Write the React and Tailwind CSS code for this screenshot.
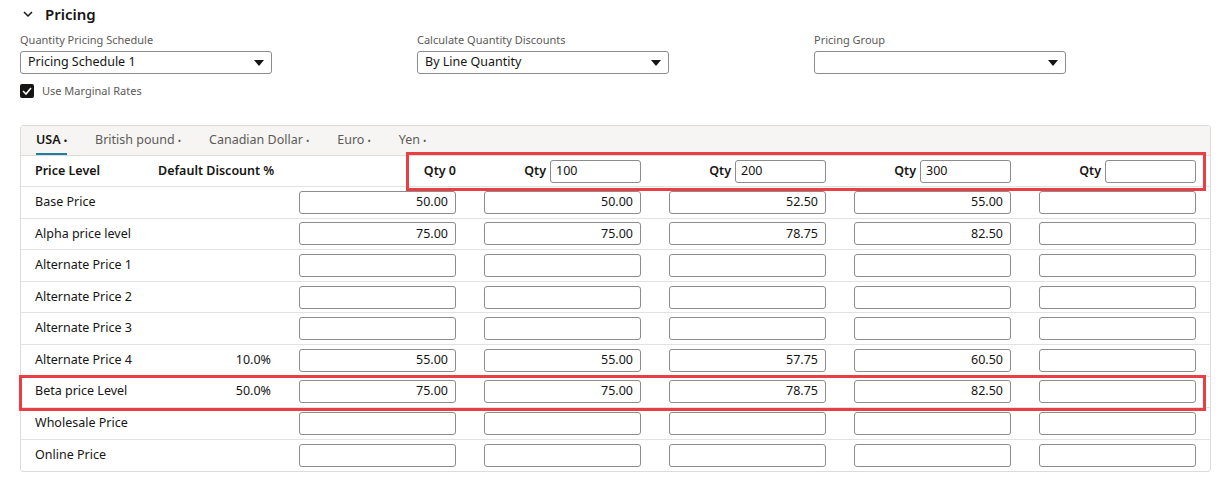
const rows = [
  ["Base Price", "", ["50.00", "50.00", "52.50", "55.00", ""]],
  ["Alpha price level", "", ["75.00", "75.00", "78.75", "82.50", ""]],
  ["Alternate Price 1", "", ["", "", "", "", ""]],
  ["Alternate Price 2", "", ["", "", "", "", ""]],
  ["Alternate Price 3", "", ["", "", "", "", ""]],
  ["Alternate Price 4", "10.0%", ["55.00", "55.00", "57.75", "60.50", ""]],
  ["Beta price Level", "50.0%", ["75.00", "75.00", "78.75", "82.50", ""]],
  ["Wholesale Price", "", ["", "", "", "", ""]],
  ["Online Price", "", ["", "", "", "", ""]],
];

function Select({ value }) {
  return (
    <div className="w-[252px] h-[23px] border border-[#8c8c8c] rounded-[3px] flex items-center justify-between px-[7px] text-[12.5px] text-[#161513] bg-white">
      <span>{value}</span>
      <svg width="10" height="6" viewBox="0 0 10 6"><path d="M0 0h10L5 6z" fill="#161513" /></svg>
    </div>
  );
}

function Cell({ v }) {
  return (
    <div className="w-[185px] flex justify-end">
      <div className="w-[157px] h-[23px] border border-[#8c8c8c] rounded-[3px] flex items-center justify-end px-[7px] text-[12.5px] text-[#161513] bg-white">{v}</div>
    </div>
  );
}

export default function App() {
  const tabs = ["British pound", "Canadian Dollar", "Euro", "Yen"];
  return (
    <div className="w-[1223px] h-[482px] bg-white relative" style={{ fontFamily: '"Noto Sans", sans-serif' }}>
      <div className="flex items-center pl-[22px] pt-[4px] h-[24px]">
        <svg width="12" height="8" viewBox="0 0 12 8"><path d="M2 2l4 4 4-4" stroke="#161513" strokeWidth="1.5" fill="none" /></svg>
        <span className="ml-[11px] text-[15px] font-semibold text-[#161513]">Pricing</span>
      </div>
      <div className="flex pl-[20px] mt-[8px] gap-[145px]">
        {[["Quantity Pricing Schedule", "Pricing Schedule 1"], ["Calculate Quantity Discounts", "By Line Quantity"], ["Pricing Group", ""]].map(([l, v]) => (
          <div key={l}>
            <div className="text-[11px] text-[#5c5a57] h-[19px]">{l}</div>
            <Select value={v} />
          </div>
        ))}
      </div>
      <div className="flex items-center pl-[20px] mt-[9px] gap-[8px]">
        <div className="w-[14px] h-[14px] bg-[#161513] rounded-[2px] flex items-center justify-center">
          <svg width="10" height="8" viewBox="0 0 10 8"><path d="M1 4l3 3 5-6" stroke="white" strokeWidth="1.6" fill="none" /></svg>
        </div>
        <span className="text-[11px] text-[#5c5a57]">Use Marginal Rates</span>
      </div>
      <div className="absolute left-[20px] top-[125px] w-[1191px] border border-[#dedcd9] rounded-[3px]">
        <div className="h-[30px] bg-[#f6f5f3] border-b border-[#dedcd9] flex items-end pl-[15px] gap-[28px] text-[12.5px] text-[#5c5a57]">
          <div className="h-full flex items-center border-b-2 border-[#227e9e] text-[#161513] font-semibold pt-[2px]">USA<span className="ml-[3px] text-[9px]">•</span></div>
          {tabs.map(t => (
            <div key={t} className="h-full flex items-center">{t}<span className="ml-[3px] text-[9px]">•</span></div>
          ))}
        </div>
        <div className="h-[31px] flex items-center pl-[14px] border-b border-[#e4e2df] text-[12.5px] font-semibold text-[#161513] whitespace-nowrap">
          <div className="w-[123px]">Price Level</div>
          <div className="w-[113px]">Default Discount %</div>
          <div className="w-[185px] text-right">Qty 0</div>
          {["100", "200", "300", ""].map((q, i) => (
            <div key={i} className="w-[185px] flex justify-end items-center gap-[4px]">
              <span>Qty</span>
              <div className="w-[91px] h-[23px] border border-[#8c8c8c] rounded-[3px] flex items-center px-[5px] font-normal">{q}</div>
            </div>
          ))}
        </div>
        {rows.map(([n, d, vals], i) => (
          <div key={n} className={`h-[31.6px] flex items-center pl-[14px] text-[12.5px] text-[#161513] ${i < rows.length - 1 ? "border-b border-[#e4e2df]" : ""}`}>
            <div className="w-[123px]">{n}</div>
            <div className="w-[113px] text-right">{d}</div>
            {vals.map((v, j) => <Cell key={j} v={v} />)}
          </div>
        ))}
      </div>
      <div className="absolute left-[406px] top-[152px] w-[800px] h-[39px] border-[3px] border-[#ea3e45]" />
      <div className="absolute left-[19px] top-[375px] w-[1187px] h-[36px] border-[3px] border-[#ea3e45]" />
    </div>
  );
}
